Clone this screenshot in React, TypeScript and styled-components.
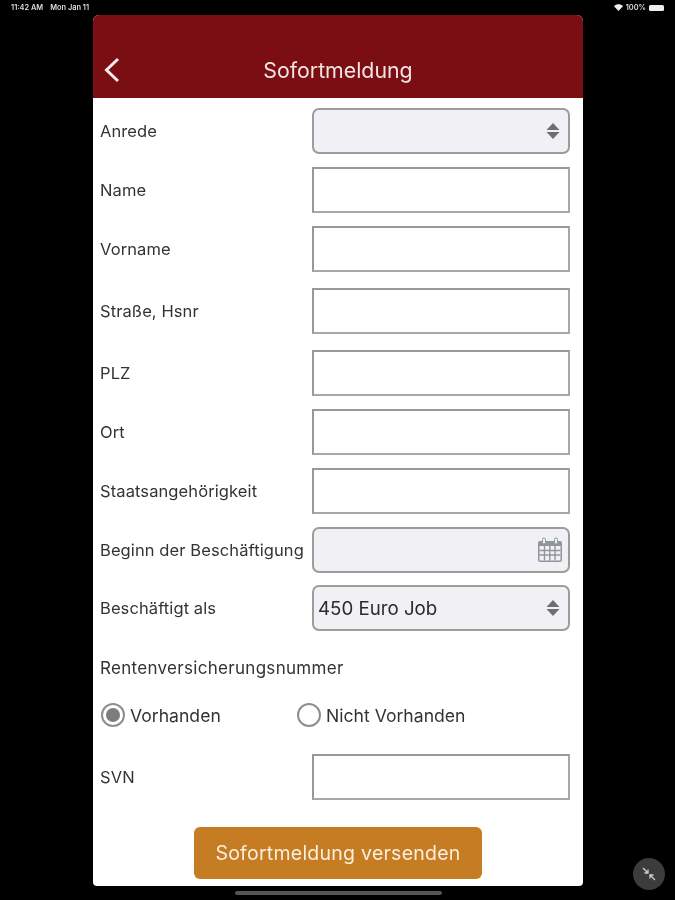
import React from "react";
import styled, { createGlobalStyle } from "styled-components";

const Global = createGlobalStyle`
  html, body { margin: 0; padding: 0; background: #000; }
  body { font-family: Inter, "Liberation Sans", sans-serif; }
`;

const Screen = styled.div`
  position: relative;
  width: 675px;
  height: 900px;
  background: #000;
  overflow: hidden;
`;

const StatusBar = styled.div`
  height: 15px;
  padding: 0 11px 0 11px;
  display: flex;
  align-items: center;
  justify-content: space-between;
  color: #dcdcdc;
  font-size: 7.4px;
  font-weight: 600;
  filter: blur(0.4px);
`;

const StatusGroup = styled.div<{ $gap: number }>`
  display: flex;
  align-items: center;
  gap: ${(p) => p.$gap}px;
`;

const Battery = styled.div`
  width: 15px;
  height: 6px;
  background: #eee;
  border-radius: 1.5px;
`;

const Card = styled.div`
  width: 490px;
  height: 871px;
  margin-left: 93px;
  background: #fff;
  border-radius: 6px 6px 4px 4px;
  overflow: hidden;
`;

const Header = styled.header`
  position: relative;
  height: 83px;
  display: flex;
  align-items: center;
  justify-content: center;
  padding-top: 27px;
  box-sizing: border-box;
  background: #7b0e12;
  color: #f3e4e4;
  font-size: 21.3px;
  filter: blur(0.4px);
`;

const Back = styled.svg`
  position: absolute;
  left: 10px;
  top: 42px;
  width: 18px;
  height: 26px;
`;

const Form = styled.div`
  padding: 10px 13px 0 7px;
  color: #333;
  filter: blur(0.45px);
`;

const Row = styled.div<{ $top: number }>`
  display: flex;
  align-items: center;
  justify-content: space-between;
  height: 46px;
  margin-top: ${(p) => p.$top}px;
`;

const Label = styled.label`
  font-size: 16.5px;
  letter-spacing: 0.1px;
  padding-bottom: 1px;
  white-space: nowrap;
`;

const Input = styled.div`
  width: 258px;
  height: 46px;
  box-sizing: border-box;
  background: #fff;
  border: 2px solid #989898;
  border-bottom-color: #a8a8a8;
  border-right-color: #a8a8a8;
`;

const Select = styled.div`
  width: 258px;
  height: 46px;
  box-sizing: border-box;
  padding: 0 8px 0 4px;
  display: flex;
  align-items: center;
  justify-content: space-between;
  background: #f0f0f5;
  border: 2px solid #9c9c9c;
  border-radius: 7px;
  font-size: 18.7px;
  color: #2b2b2b;
`;

const SectionTitle = styled.div`
  margin-top: 27px;
  height: 20px;
  line-height: 20px;
  font-size: 17px;
  letter-spacing: 0.3px;
`;

const Radios = styled.div`
  display: flex;
  align-items: center;
  margin-top: 25px;
  height: 24px;
`;

const RadioItem = styled.div<{ $width: number }>`
  display: flex;
  align-items: center;
  gap: 5px;
  width: ${(p) => p.$width}px;
  font-size: 17.6px;
`;

const RadioCircle = styled.span<{ $on?: boolean }>`
  position: relative;
  width: 24px;
  height: 24px;
  margin-left: 1px;
  box-sizing: border-box;
  border: 2px solid #8e8e8e;
  border-radius: 50%;
  display: flex;
  align-items: center;
  justify-content: center;
  &::after {
    content: "";
    display: ${(p) => (p.$on ? "block" : "none")};
    width: 14px;
    height: 14px;
    border-radius: 50%;
    background: #7d7d7d;
  }
`;

const ButtonRow = styled.div`
  display: flex;
  justify-content: center;
  margin-top: 27px;
  padding-left: 6px;
`;

const SendButton = styled.button`
  width: 288px;
  height: 52px;
  border: 0;
  border-radius: 6px;
  background: #c67c22;
  color: #fbeedd;
  font-family: inherit;
  font-size: 19.5px;
  letter-spacing: 0.25px;
`;

const HomeBar = styled.div`
  position: absolute;
  left: 235px;
  top: 891px;
  width: 207px;
  height: 4px;
  border-radius: 2px;
  background: #555;
`;

const Floating = styled.div`
  position: absolute;
  left: 633px;
  top: 858px;
  width: 32px;
  height: 32px;
  border-radius: 50%;
  background: #3c3c3c;
  display: flex;
  align-items: center;
  justify-content: center;
`;

const Updown = () => (
  <svg width="14" height="18" viewBox="0 0 14 18">
    <path d="M7 1 L13.5 8 H0.5 Z M7 17 L13.5 10 H0.5 Z" fill="#6f6f6f" />
  </svg>
);

const CalendarIcon = styled.svg`
  margin-right: -3px;
`;

const Calendar = () => (
  <CalendarIcon width="26" height="26" viewBox="0 0 26 26" fill="none">
    <rect x="1" y="4" width="24" height="21" rx="2" fill="#8f979b" />
    <rect x="2.5" y="9" width="21" height="14.5" fill="#f0f0f5" />
    <path d="M2.5 13.5H23.5M2.5 18H23.5M7.5 9V23.5M12.8 9V23.5M18 9V23.5" stroke="#8f979b" strokeWidth="1.4" />
    <rect x="5.5" y="1" width="3" height="6" rx="1.5" fill="#f0f0f5" stroke="#8f979b" />
    <rect x="17.5" y="1" width="3" height="6" rx="1.5" fill="#f0f0f5" stroke="#8f979b" />
  </CalendarIcon>
);

const fields: { label: string; top: number }[] = [
  { label: "Name", top: 13 },
  { label: "Vorname", top: 13 },
  { label: "Straße, Hsnr", top: 16 },
  { label: "PLZ", top: 16 },
  { label: "Ort", top: 13 },
  { label: "Staatsangehörigkeit", top: 13 },
];

export default function App() {
  return (
    <Screen>
      <Global />
      <StatusBar>
        <StatusGroup $gap={7}>
          <span>11:42 AM</span>
          <span>Mon Jan 11</span>
        </StatusGroup>
        <StatusGroup $gap={3}>
          <svg width="9" height="7" viewBox="0 0 9 7">
            <path d="M0 2.2 C2.6 -0.4 6.4 -0.4 9 2.2 L4.5 7 Z" fill="#eee" />
          </svg>
          <span>100%</span>
          <Battery />
        </StatusGroup>
      </StatusBar>
      <Card>
        <Header>
          <Back viewBox="0 0 18 26" fill="none">
            <path d="M15 2 L3.5 13 L15 24" stroke="#f6ecec" strokeWidth="3" />
          </Back>
          Sofortmeldung
        </Header>
        <Form>
          <Row $top={0}>
            <Label>Anrede</Label>
            <Select>
              <span />
              <Updown />
            </Select>
          </Row>
          {fields.map((f) => (
            <Row key={f.label} $top={f.top}>
              <Label>{f.label}</Label>
              <Input />
            </Row>
          ))}
          <Row $top={13}>
            <Label>Beginn der Beschäftigung</Label>
            <Select>
              <span />
              <Calendar />
            </Select>
          </Row>
          <Row $top={12}>
            <Label>Beschäftigt als</Label>
            <Select>
              <span>450 Euro Job</span>
              <Updown />
            </Select>
          </Row>
          <SectionTitle>Rentenversicherungsnummer</SectionTitle>
          <Radios>
            <RadioItem $width={196}>
              <RadioCircle $on />
              Vorhanden
            </RadioItem>
            <RadioItem $width={180}>
              <RadioCircle />
              Nicht Vorhanden
            </RadioItem>
          </Radios>
          <Row $top={27}>
            <Label>SVN</Label>
            <Input />
          </Row>
          <ButtonRow>
            <SendButton>Sofortmeldung versenden</SendButton>
          </ButtonRow>
        </Form>
      </Card>
      <HomeBar />
      <Floating>
        <svg width="16" height="16" viewBox="0 0 16 16" fill="none" stroke="#cfcfcf" strokeWidth="1.3">
          <path d="M2 2 L7 7 M7 3.5 V7 H3.5 M14 14 L9 9 M9 12.5 V9 H12.5" />
        </svg>
      </Floating>
    </Screen>
  );
}
